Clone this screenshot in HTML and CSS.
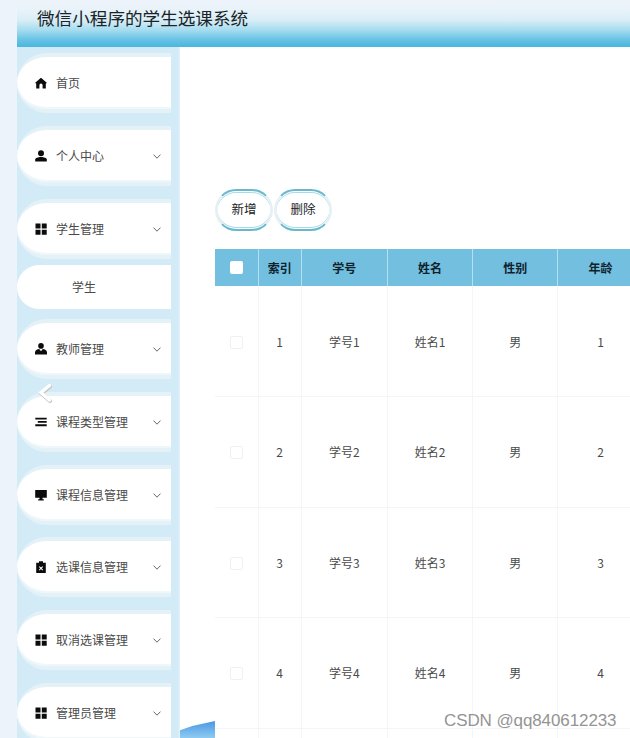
FILE: index.html
```html
<!DOCTYPE html>
<html lang="zh">
<head>
<meta charset="utf-8">
<title>微信小程序的学生选课系统</title>
<link rel="stylesheet" href="styles.css">
</head>
<body>
<div class="app">
  <header class="topbar"><h1 class="title">微信小程序的学生选课系统</h1></header>
  <div class="body">
    <nav class="sidebar">
      <div class="item">
        <svg class="icon" viewBox="0 0 12 12"><path d="M6 .8 .2 5.8l1 .9V11.5h3.2V8.2a1.6 1.6 0 0 1 3.2 0v3.3h3.2V6.7l1-.9z"/></svg>
        <span class="label">首页</span>
      </div>
      <div class="item">
        <svg class="icon" viewBox="0 0 12 12"><circle cx="6" cy="3.2" r="3"/><path d="M.2 11.5V9.6C.2 8 3 7 6 7s5.8 1 5.8 2.6v1.9z"/></svg>
        <span class="label">个人中心</span>
        <svg class="chev" viewBox="0 0 8 5"><path d="M.5.6 4 4.2 7.5.6"/></svg>
      </div>
      <div class="item">
        <svg class="icon" viewBox="0 0 12 12"><path d="M.5.5h5v5h-5zM6.8.5h4.9v5H6.800zM.5 6.800h5v4.900h-5zM6.800 6.800h4.900v4.900H6.800z"/></svg>
        <span class="label">学生管理</span>
        <svg class="chev" viewBox="0 0 8 5"><path d="M.5.6 4 4.200 7.500.6"/></svg>
      </div>
      <div class="subitem">学生</div>
      <div class="item">
        <svg class="icon" viewBox="0 0 12 12"><circle cx="6" cy="2.900" r="2.800"/><path d="M0 11.500V9.500C0 7.600 2.200 6.300 4.200 6.100L6 8.200l1.800-2.100C9.800 6.300 12 7.600 12 9.500v2z"/></svg>
        <span class="label">教师管理</span>
        <svg class="chev" viewBox="0 0 8 5"><path d="M.5.6 4 4.200 7.500.6"/></svg>
      </div>
      <div class="item">
        <svg class="icon" viewBox="0 0 12 12"><path d="M.3 1.800h11.400v1.800H.3zM2.800 5.100h8.900v1.600H2.800zM.3 8.300h11.400v2H.3z"/></svg>
        <span class="label">课程类型管理</span>
        <svg class="chev" viewBox="0 0 8 5"><path d="M.5.6 4 4.200 7.500.6"/></svg>
      </div>
      <div class="item">
        <svg class="icon" viewBox="0 0 12 12"><path d="M.2 1h11.600v7.800H.2zM4.500 8.800h3v1.400h1.300v1.200H3.200v-1.200h1.300z"/></svg>
        <span class="label">课程信息管理</span>
        <svg class="chev" viewBox="0 0 8 5"><path d="M.5.6 4 4.200 7.500.6"/></svg>
      </div>
      <div class="item">
        <svg class="icon" viewBox="0 0 12 12"><path fill-rule="evenodd" d="M4 .3h4v1.400h2.800v10.300H1.200V1.700H4zM4.600 5.200 3.900 5.900 5.300 7.300 3.900 8.700l.7.7L6 8l1.400 1.400.7-.7L6.700 7.300l1.400-1.400-.7-.7L6 6.600z"/></svg>
        <span class="label">选课信息管理</span>
        <svg class="chev" viewBox="0 0 8 5"><path d="M.5.6 4 4.200 7.500.6"/></svg>
      </div>
      <div class="item">
        <svg class="icon" viewBox="0 0 12 12"><path d="M.5.500h5v5h-5zM6.800.500h4.900v5H6.800zM.5 6.800h5v4.900h-5zM6.800 6.800h4.900v4.900H6.800z"/></svg>
        <span class="label">取消选课管理</span>
        <svg class="chev" viewBox="0 0 8 5"><path d="M.5.6 4 4.200 7.500.6"/></svg>
      </div>
      <div class="item">
        <svg class="icon" viewBox="0 0 12 12"><path d="M.5.500h5v5h-5zM6.800.500h4.900v5H6.800zM.5 6.800h5v4.900h-5zM6.800 6.800h4.900v4.900H6.800z"/></svg>
        <span class="label">管理员管理</span>
        <svg class="chev" viewBox="0 0 8 5"><path d="M.5.6 4 4.200 7.500.6"/></svg>
      </div>
    </nav>
    <main class="main">
      <div class="toolbar">
        <button class="btn">新增</button>
        <button class="btn">删除</button>
      </div>
      <table class="grid">
        <colgroup>
          <col class="c-check"><col class="c-index"><col class="c-wide"><col class="c-mid"><col class="c-mid"><col class="c-mid">
        </colgroup>
        <thead>
          <tr><th><span class="check-head"></span></th><th>索引</th><th>学号</th><th>姓名</th><th>性别</th><th>年龄</th></tr>
        </thead>
        <tbody>
          <tr><td><span class="check"></span></td><td>1</td><td>学号1</td><td>姓名1</td><td>男</td><td>1</td></tr>
          <tr><td><span class="check"></span></td><td>2</td><td>学号2</td><td>姓名2</td><td>男</td><td>2</td></tr>
          <tr><td><span class="check"></span></td><td>3</td><td>学号3</td><td>姓名3</td><td>男</td><td>3</td></tr>
          <tr><td><span class="check"></span></td><td>4</td><td>学号4</td><td>姓名4</td><td>男</td><td>4</td></tr>
          <tr><td></td><td></td><td></td><td></td><td></td><td></td></tr>
        </tbody>
      </table>
      <div class="wave"></div>
    </main>
  </div>
  <svg class="collapse" viewBox="0 0 16 20"><path class="collapse-shade" d="M13 3.500 4.500 10.500l8.500 7.500"/><path class="collapse-arrow" d="M12.500 2.500 4 9.500l8.500 7.500"/></svg>
  <div class="watermark">CSDN @qq840612233</div>
</div>
</body>
</html>
```

FILE: styles.css
```css
html, body {
  margin: 0;
  height: 738px;
  overflow: hidden;
  background: #edf3fb;
}
body {
  padding-left: 17px;
  font-family: "Noto Sans CJK SC", "Liberation Serif", serif;
  color: #333;
}
.app {
  width: 613px;
  height: 738px;
  overflow: hidden;
}
.topbar {
  height: 47px;
  box-sizing: border-box;
  padding: 5px 0 0 20px;
  background: linear-gradient(180deg, #eef3fa 0, #e8f3f9 10px, #d9eef6 20px, #a6dcef 30px, #6cc4e6 39px, #4db7df 46px);
}
.title {
  margin: 0;
  font-size: 17.6px;
  line-height: 26px;
  font-weight: 400;
  color: #1a2429;
}
.body {
  display: flex;
  height: 691px;
}
.sidebar {
  flex: 0 0 163px;
  box-sizing: border-box;
  padding: 6px 9px 0 0;
  background: linear-gradient(90deg, #d3ebf7 0, #d3ebf7 161px, #e4f3f9 163px);
  display: flex;
  flex-direction: column;
  gap: 12.8px;
}
.item {
  flex: 0 0 60px;
  box-sizing: border-box;
  display: flex;
  align-items: center;
  padding-left: 18px;
  border-radius: 30px 0 0 30px;
  background: #fff;
  border-top: 4px solid #e4f2f7;
  border-bottom: 4px solid #e4f2f7;
  box-shadow: inset 0 1px 0 #fff, inset 0 -2px 0 #eef7fa;
  font-size: 12px;
}
.icon {
  width: 12px;
  height: 12px;
  flex: none;
  fill: #0c0c0c;
}
.label {
  margin-left: 9px;
  color: #4a4a4a;
  line-height: 18px;
}
.chev {
  width: 8px;
  height: 5px;
  margin: 1px 10px 0 auto;
  fill: none;
  stroke: #555;
  stroke-width: .9;
}
.subitem {
  flex: 0 0 44px;
  margin: -6.6px 0 -2.6px;
  padding-left: 55px;
  border-radius: 22px 0 0 22px;
  background: #fff;
  font-size: 12px;
  line-height: 44px;
  color: #4a4a4a;
}
.main {
  position: relative;
  flex: 1;
  min-width: 0;
  overflow: hidden;
  padding: 142px 0 0 35px;
  background: #fff;
}
.toolbar {
  display: flex;
  gap: 1px;
}
.btn {
  width: 58px;
  height: 42px;
  padding: 0 0 3px;
  font: inherit;
  font-size: 12.5px;
  color: #222;
  background: #fff;
  border: 2px solid #e6f0f3;
  border-top-color: #68b9cd;
  border-bottom-color: #68b9cd;
  border-radius: 21px;
  box-shadow: inset 0 1px 0 #fff, inset 0 2px 0 #a9dbe6, inset 0 -1px 0 #fff, inset 0 -2px 0 #a9dbe6;
}
.grid {
  position: relative;
  z-index: 1;
  table-layout: fixed;
  width: 428px;
  margin-top: 18px;
  border-collapse: collapse;
  background: #fff;
  font-size: 12px;
}
.c-check { width: 43px; }
.c-index { width: 43px; }
.c-wide { width: 86px; }
.c-mid { width: 85px; }
.grid th {
  height: 37px;
  padding: 0;
  background: #72bfe0;
  border-left: 1px solid #b4e0ef;
  color: #10222a;
  font-weight: 700;
}
.grid th:first-child, .grid td:first-child { border-left: 0; }
.grid td {
  height: 110.5px;
  box-sizing: border-box;
  padding: 0;
  text-align: center;
  color: #4a4a4a;
  border-left: 1px solid #f3f5f6;
  border-bottom: 1px solid #f3f5f6;
}
.check-head {
  display: block;
  width: 13px;
  height: 13px;
  margin: 0 auto;
  background: #fff;
  border-radius: 2px;
}
.check {
  display: block;
  width: 11px;
  height: 11px;
  margin: 2px auto 0;
  border: 1px solid #eef0f1;
  border-radius: 2px;
}
.wave {
  position: absolute;
  left: 0;
  bottom: 0;
  width: 35px;
  height: 17px;
  background: linear-gradient(180deg, #4a97e2, #8fcbf2);
  clip-path: polygon(0 55%, 35% 30%, 100% 0, 100% 100%, 0 100%);
}
.collapse {
  position: absolute;
  left: 37px;
  top: 383px;
  width: 16px;
  height: 20px;
  fill: none;
  stroke-linecap: round;
}
.collapse-shade { stroke: #c4c4c4; stroke-width: 4; }
.collapse-arrow { stroke: #fff; stroke-width: 3.5; }
.watermark {
  position: absolute;
  left: 444px;
  top: 711px;
  z-index: 2;
  font-family: "Liberation Sans", sans-serif;
  font-size: 17px;
  line-height: 20px;
  letter-spacing: -.1px;
  color: #949494;
}
```
